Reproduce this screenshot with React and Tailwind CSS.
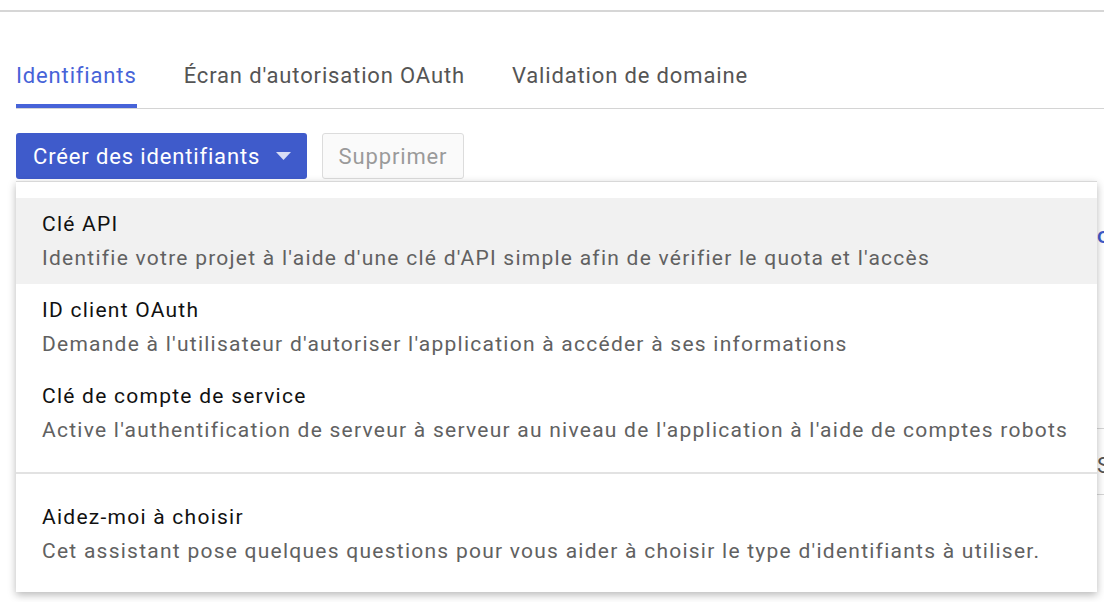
const menuItems = [
  {
    title: 'Clé API',
    desc: "Identifie votre projet à l'aide d'une clé d'API simple afin de vérifier le quota et l'accès",
    active: true
  },
  {
    title: 'ID client OAuth',
    desc: "Demande à l'utilisateur d'autoriser l'application à accéder à ses informations"
  },
  {
    title: 'Clé de compte de service',
    desc: "Active l'authentification de serveur à serveur au niveau de l'application à l'aide de comptes robots"
  }
];

const tabs = ['Identifiants', "Écran d'autorisation OAuth", 'Validation de domaine'];

const MenuItem = ({ title, desc, active }) => (
  <div className={`px-[26px] py-[9px] tracking-[1.25px] ${active ? 'bg-[#f1f1f1]' : ''}`}>
    <div className="text-[21px] leading-[34px] text-[#111]">{title}</div>
    <div className="text-[21px] leading-[34px] text-[#616161] whitespace-nowrap">{desc}</div>
  </div>
);

const App = () => {
  return (
    <div className="relative w-[1104px] h-[602px] bg-white overflow-hidden font-['Roboto',sans-serif]">
      {/* top rule */}
      <div className="pt-[10px]">
        <div className="h-[2px] bg-[#d6d6d6]" />
      </div>

      {/* tabs */}
      <div className="ml-4 mt-[45px] flex gap-[47px] border-b border-[#d4d4d4] h-[52px]">
        {tabs.map((tab, i) => (
          <div
            key={tab}
            className={`text-[22px] leading-[38px] tracking-[0.85px] ${i === 0 ? 'text-[#4763d8] border-b-[4px] border-[#4763d8]' : 'text-[#555]'}`}
          >
            {tab}
          </div>
        ))}
      </div>

      {/* toolbar */}
      <div className="ml-4 mt-[24px] flex gap-[15px] tracking-[0.85px]">
        <button className="h-[46px] w-[291px] rounded-[3px] bg-[#3f5bcb] text-white text-[22px] pl-[17px] flex items-center">
          Créer des identifiants
          <svg className="ml-[16px]" width="15" height="8" viewBox="0 0 15 8">
            <path d="M0 0h15L7.5 8z" fill="#d8def5" />
          </svg>
        </button>
        <button className="h-[46px] w-[142px] rounded-[3px] border border-[#dcdcdc] bg-[#fafafa] text-[#9a9a9a] text-[22px]">
          Supprimer
        </button>
      </div>

      {/* page content behind the menu (only its right edge shows) */}
      <div className="ml-4 grid grid-cols-[1081px_40px] text-[22px] whitespace-nowrap">
        <div className="h-[40px]" />
        <div />
        <div className="h-[209px]" />
        <div className="text-[#3f5bcb] font-medium">o</div>
        <div className="h-[66px]" />
        <div className="border-t border-[#d6d6d6] pt-[20px] text-[#555]">Si</div>
        <div />
        <div className="border-t border-[#d6d6d6]" />
      </div>

      {/* dropdown menu */}
      <div className="absolute left-4 top-[181px] w-[1081px] bg-white border-t border-[#d8d8d8] shadow-[0_3px_8px_rgba(0,0,0,0.28)] pt-[16px] pb-[15px]">
        {menuItems.map((item) => (
          <MenuItem key={item.title} {...item} />
        ))}
        <div className="mt-[16px] mb-[17px] h-[2px] bg-[#e2e2e2]" />
        <MenuItem
          title="Aidez-moi à choisir"
          desc="Cet assistant pose quelques questions pour vous aider à choisir le type d'identifiants à utiliser."
        />
      </div>
    </div>
  );
};

export default App;
